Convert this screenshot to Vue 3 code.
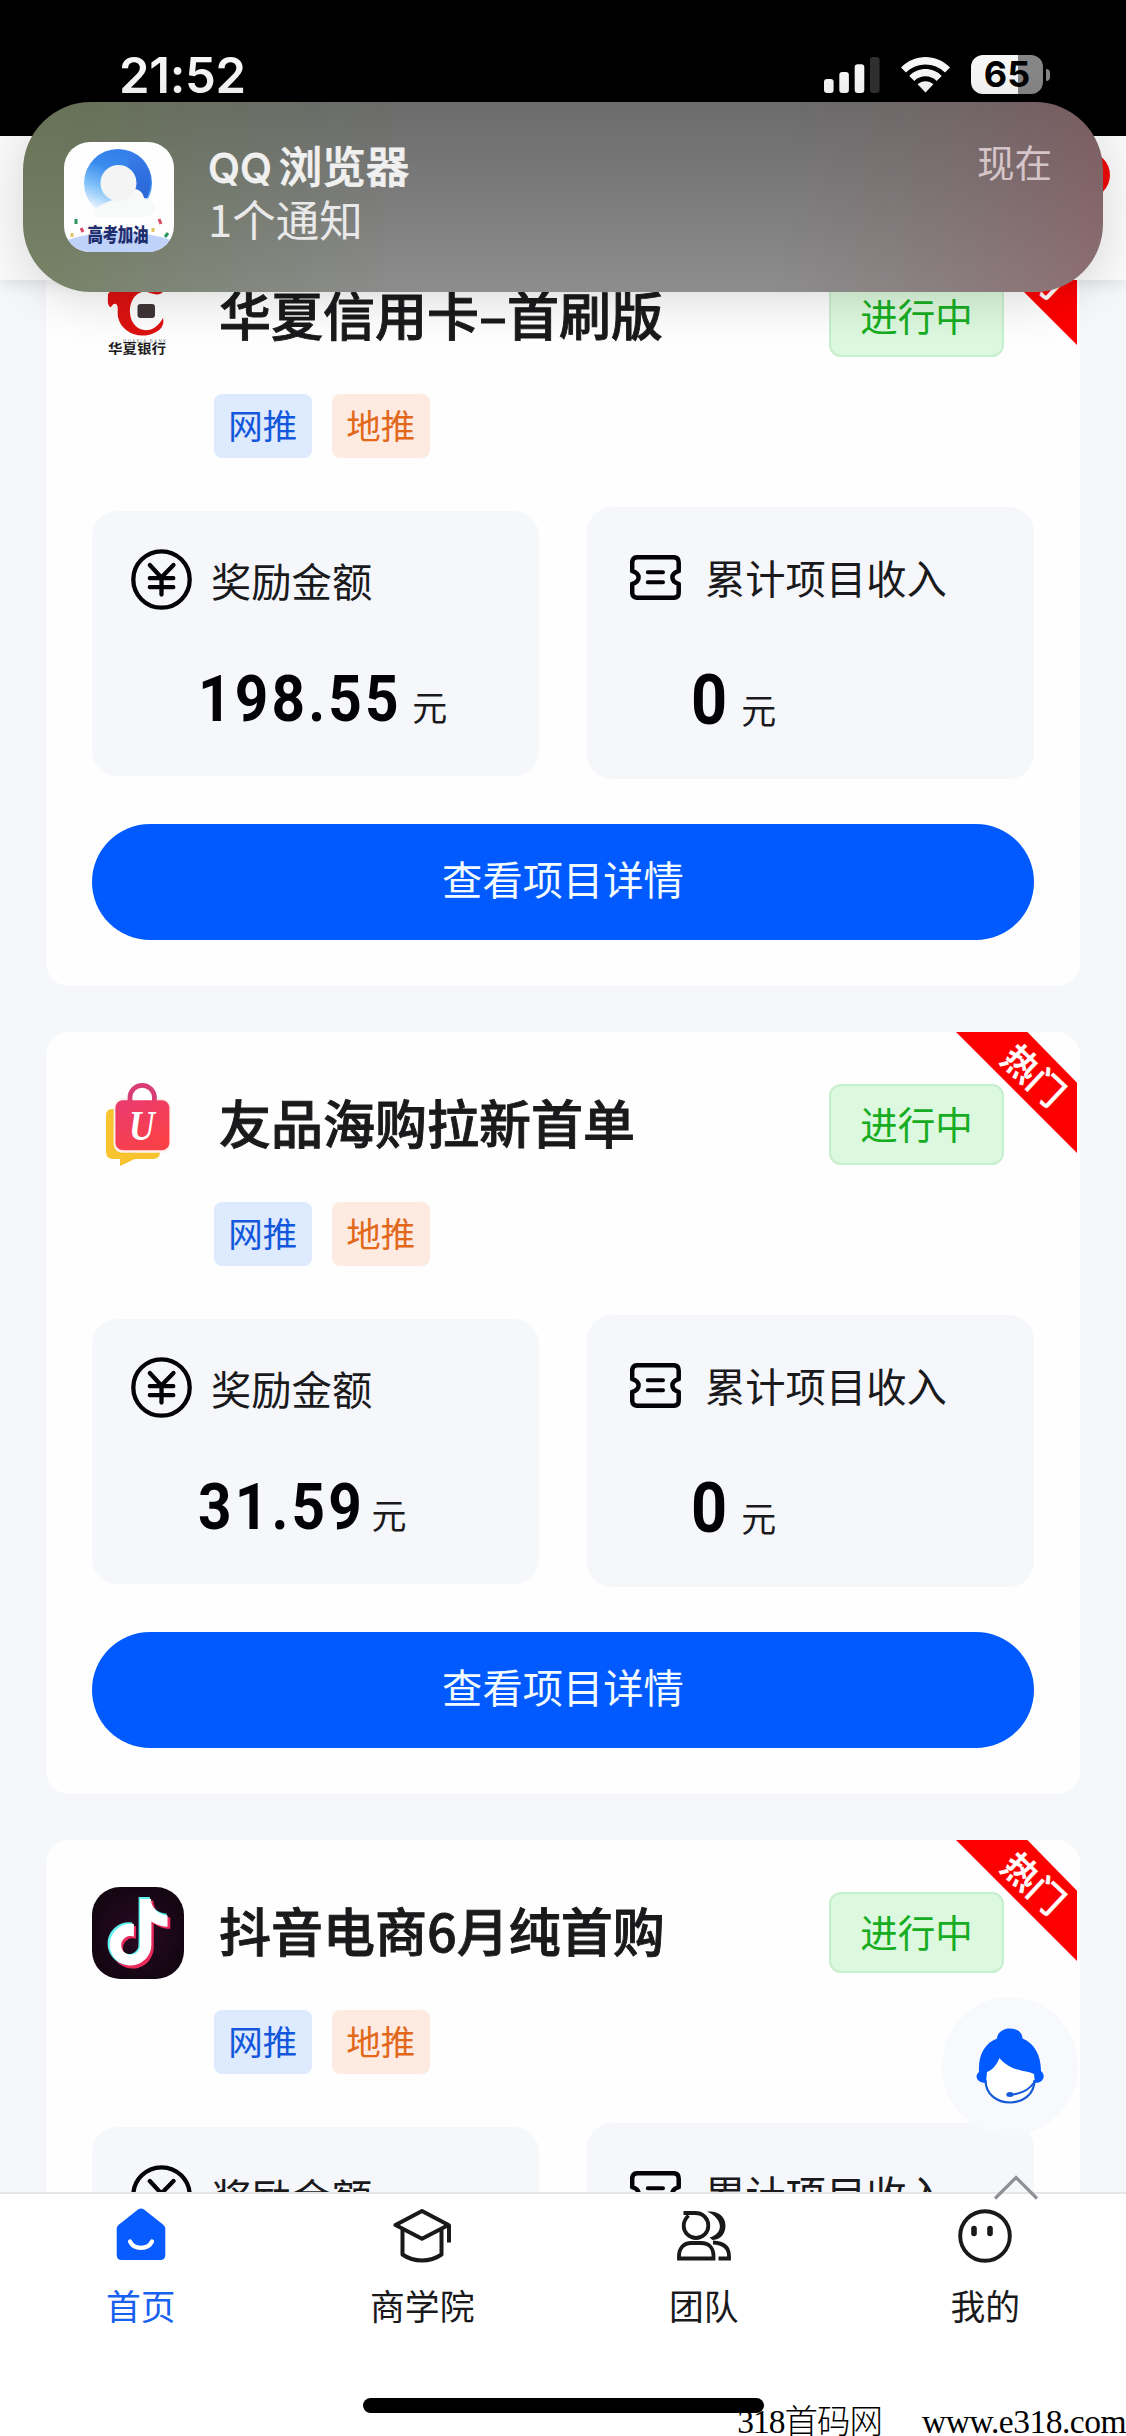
<script setup>
const projects = [
  { id: 'huaxia', name: '华夏信用卡–首刷版', reward: '198.55', income: '0' },
  { id: 'youpin', name: '友品海购拉新首单', reward: '31.59', income: '0' },
  { id: 'douyin', name: '抖音电商6月纯首购' }
]
const note = 'M12.525.02c1.31-.02 2.61-.01 3.91-.02.08 1.53.63 3.09 1.75 4.17 1.12 1.11 2.7 1.62 4.24 1.79v4.03c-1.44-.05-2.89-.35-4.2-.97-.57-.26-1.1-.59-1.62-.93-.01 2.92.01 5.84-.02 8.75-.08 1.4-.54 2.79-1.35 3.94-1.31 1.92-3.58 3.17-5.91 3.21-1.43.08-2.86-.31-4.08-1.03-2.02-1.19-3.44-3.37-3.65-5.71-.02-.5-.03-1-.01-1.49.18-1.9 1.12-3.72 2.58-4.96 1.66-1.44 3.98-2.13 6.15-1.72.02 1.48-.04 2.96-.04 4.44-.99-.32-2.15-.23-3.02.37-.63.41-1.11 1.04-1.36 1.75-.21.51-.15 1.07-.14 1.61.24 1.64 1.82 3.02 3.5 2.87 1.12-.01 2.19-.66 2.77-1.61.19-.33.4-.67.41-1.06.1-1.79.06-3.57.07-5.36.01-4.03-.01-8.05.02-12.07z'
</script>

<template>
  <div class="phone">
    <header class="status-bar">
      <span class="time">21:52</span>
      <div class="indicators">
        <svg class="signal" width="56" height="36" viewBox="0 0 56 36">
          <rect x="0" y="22" width="9.6" height="14" rx="3" fill="#f6f6f6" />
          <rect x="15.3" y="15" width="9.6" height="21" rx="3" fill="#f6f6f6" />
          <rect x="30.7" y="7.3" width="9.6" height="28.7" rx="3" fill="#f6f6f6" />
          <rect x="46" y="0" width="9.6" height="36" rx="3" fill="#303030" />
        </svg>
        <svg class="wifi" width="49" height="36" viewBox="0 0 49 36">
          <path d="M0 10.5C13.5-3.5 35.5-3.5 49 10.5L44 15.6C33.3 4.8 15.7 4.8 5 15.6Z" fill="#f6f6f6" />
          <path d="M8.3 18.9C17.3 9.8 31.7 9.8 40.7 18.9L35.7 24C29.5 17.8 19.5 17.8 13.3 24Z" fill="#f6f6f6" />
          <path d="M16.6 27.3C21 23.2 28 23.2 32.4 27.3L24.5 35.5Z" fill="#f6f6f6" />
        </svg>
        <div class="battery"><span>65</span></div>
        <i class="battery-tip"></i>
      </div>
    </header>

    <div class="nav-bar"><i class="nav-dot"></i></div>

    <main class="list">
      <section v-for="p in projects" :key="p.id" class="card">
        <div class="ribbon"><span>热门</span></div>
        <div class="head">
          <svg v-if="p.id === 'huaxia'" class="logo" width="92" height="92" viewBox="0 0 92 92">
            <path d="M16 23C20 17 24 22 29 20C34 11 48 8 58 13L73 17C70 25 65 24 58 22C47 17 37 28 38 42C39 56 51 63 62 57C67 54 69 50 71 47C73 54 68 60 62 62C47 69 29 61 26 46C25 41 27 35 24 33C20 32 20 37 18 36C15 33 16 29 16 23Z" fill="#dc1210" />
            <rect x="45.5" y="33" width="17.5" height="14" rx="3" fill="#403536" />
            <text x="31" y="71.5" font-size="4.5" textLength="43" fill="#777">HUAXIA BANK</text>
            <text x="16" y="81.5" font-size="13" font-weight="700" textLength="58" lengthAdjust="spacingAndGlyphs" fill="#1c1a1a">华夏银行</text>
          </svg>
          <svg v-else-if="p.id === 'youpin'" class="logo" width="92" height="92" viewBox="0 0 92 92">
            <defs>
              <linearGradient id="bag" x1="0" y1="0" x2=".6" y2="1">
                <stop offset="0" stop-color="#e83a70" />
                <stop offset="1" stop-color="#fb4148" />
              </linearGradient>
            </defs>
            <path d="M20 30H60Q68 34 68 42V73Q68 80 61 80H43L28 87V80H21Q14 80 14 73V37Q14 30 20 30Z" fill="#f7c42f" />
            <rect x="21.6" y="19.3" width="57.5" height="54.5" rx="9" fill="#fdf1ee" />
            <path d="M38 23V18.5a12.2 12.2 0 0 1 24.4 0V23" fill="#fff" stroke="#d83d76" stroke-width="4.8" />
            <rect x="23.4" y="21.3" width="54" height="50" rx="7.5" fill="url(#bag)" />
            <text class="bag-letter" x="60" y="61.5" text-anchor="middle" transform="scale(.83 1)" fill="#fff">U</text>
          </svg>
          <svg v-else class="logo" width="92" height="92" viewBox="0 0 92 92">
            <defs>
              <radialGradient id="night"><stop offset="0" stop-color="#2a0a24" /><stop offset="1" stop-color="#150613" /></radialGradient>
            </defs>
            <rect width="92" height="92" rx="28" fill="url(#night)" />
            <path :d="note" transform="translate(14.8 13.6) scale(2.83)" fill="#ea2a5b" />
            <path :d="note" transform="translate(11.2 10) scale(2.83)" fill="#5df3f0" />
            <path :d="note" transform="translate(13.4 12) scale(2.77)" fill="#fff" />
          </svg>
          <h2>{{ p.name }}</h2>
          <span class="state">进行中</span>
        </div>
        <div class="tags">
          <span class="tag web">网推</span>
          <span class="tag local">地推</span>
        </div>
        <div class="stats">
          <div class="stat reward">
            <div class="stat-label">
              <svg width="61" height="61" viewBox="0 0 61 61" fill="none" stroke="#030306" stroke-width="4.3" stroke-linecap="round" stroke-linejoin="round">
                <circle cx="30.5" cy="30.5" r="28.2" />
                <path d="M18.8 16L30.3 28.5L42.5 16M18.8 29.2H42.3M18.8 38.2H42.3M30.5 28.5V45.5" />
              </svg>
              <span>奖励金额</span>
            </div>
            <div v-if="p.reward" class="value"><b>{{ p.reward }}</b><span>元</span></div>
          </div>
          <div class="stat income">
            <div class="stat-label">
              <svg width="51" height="45" viewBox="0 0 51 45" fill="none" stroke="#030306" stroke-width="4.5" stroke-linecap="round" stroke-linejoin="round">
                <path d="M7.5 2.2H43.5Q48.7 2.2 48.7 7.5V16.2C40.3 18.5 40.3 26.5 48.7 28.8V37.5Q48.7 42.8 43.5 42.8H7.5Q2.2 42.8 2.2 37.5V28.8C10.7 26.5 10.7 18.5 2.2 16.2V7.5Q2.2 2.2 7.5 2.2Z" />
                <path d="M17.8 17.3H33M17.8 27.2H33" stroke-width="4" />
              </svg>
              <span>累计项目收入</span>
            </div>
            <div v-if="p.income" class="value"><b>{{ p.income }}</b><span>元</span></div>
          </div>
        </div>
        <button v-if="p.reward" class="detail" type="button">查看项目详情</button>
      </section>
    </main>

    <nav class="tab-bar">
      <a class="tab active">
        <svg width="58" height="58" viewBox="0 0 58 58">
          <path d="M26 3.5Q29 1.5 32 3.5L51 18.5Q53.3 20.5 53.3 23V49Q53.3 54 48.3 54H9.7Q4.7 54 4.7 49V23Q4.7 20.5 7 18.5Z" fill="#085bff" />
          <path d="M18 35.5C22 44 36 44 40 35.5" fill="none" stroke="#fff" stroke-width="4.2" stroke-linecap="round" />
        </svg>
        <span>首页</span>
      </a>
      <a class="tab">
        <svg width="58" height="58" viewBox="0 0 58 58" fill="none" stroke="#19191b" stroke-width="4" stroke-linejoin="round">
          <path d="M2.5 19L29 5L55.5 19L29 32.8Z" />
          <path d="M9.5 23.5V48.5C21 56.5 37 56.5 48.5 48.5V23.5M56 18.5V36.5" />
        </svg>
        <span>商学院</span>
      </a>
      <a class="tab">
        <svg width="58" height="58" viewBox="0 0 58 58" fill="none" stroke="#19191b" stroke-width="3.8">
          <path d="M8.500 7H20C28.500 7 33.300 13 33.300 19.700A12.300 12.300 0 0 1 8.700 19.700C8.700 15 11 12 13.500 9.500" />
          <path d="M32 5.500H36C41 5.500 50.500 9 50.500 19.500C50.500 30 43 34 37.500 34L34.500 31.500C49 27.500 48.500 13 32 5.500Z" fill="#19191b" stroke="none" />
          <path d="M4 52.5V50C4 42 9 37 16 37H26C34 37 38.500 42 38.500 50V52.5Z" />
          <path d="M38 36.500C49 37 54 42 54 50V52.500H43.500" />
        </svg>
        <span>团队</span>
      </a>
      <a class="tab">
        <svg width="58" height="58" viewBox="0 0 58 58" fill="none" stroke="#19191b">
          <circle cx="29" cy="30" r="24.8" stroke-width="3.9" />
          <path d="M18 22.500V27.500M34 22.500V27.500" stroke-width="5.600" stroke-linecap="round" />
        </svg>
        <span>我的</span>
      </a>
      <i class="home-line"></i>
    </nav>

    <button class="service" type="button" aria-label="客服">
      <svg width="68" height="76" viewBox="0 0 68 76">
        <path d="M10 40L24 28L58 44V54C58 66 48 74 34 74C20 74 10 64 10 50Z" fill="#fff" />
        <path d="M9.500 52C9.500 82 58.500 82 58.500 52" fill="none" stroke="#1459d6" stroke-width="2.200" />
        <path d="M21 10.500C22-3 46-3 46.500 10.500C58 15 65 27 65 43C70 47 68 55 59 55L58 46C50 42 35 44 23.500 30C21 36 17 42 11 44L10 55C1 55-2 48 3 44C2 27 9 15 21 10.500Z" fill="#005aff" />
        <path d="M58.500 54C53 62 46 66 35 66.500" fill="none" stroke="#1459d6" stroke-width="2" />
        <ellipse cx="34" cy="66.500" rx="3.700" ry="2.500" fill="#1459d6" />
      </svg>
    </button>
    <svg class="to-top" width="46" height="26" viewBox="0 0 46 26" fill="none" stroke="#909097" stroke-width="3.200">
      <path d="M2 23.500L23 2.500L44 23.500" />
    </svg>

    <aside class="notice">
      <svg class="notice-icon" width="110" height="110" viewBox="0 0 110 110">
        <defs>
          <linearGradient id="q" x1=".7" y1="0" x2=".3" y2="1">
            <stop offset="0" stop-color="#347bea" />
            <stop offset=".35" stop-color="#388bed" />
            <stop offset=".65" stop-color="#7fc0f8" />
            <stop offset="1" stop-color="#fff" />
          </linearGradient>
          <linearGradient id="q2" x1="0" y1="0" x2="0" y2="1">
            <stop offset="0" stop-color="#3d7ee9" />
            <stop offset="1" stop-color="#1e55cf" />
          </linearGradient>
          <clipPath id="tile"><rect width="110" height="110" rx="26" /></clipPath>
        </defs>
        <g clip-path="url(#tile)">
          <rect width="110" height="110" fill="#fdfefd" />
          <path d="M0 99Q55 80 110 99V110H0Z" fill="#bfd2fa" />
          <circle cx="54" cy="41" r="34" fill="url(#q)" />
          <path d="M66 9.500C86 16 92 38 82 58L70 46C74 38 71 30 64 25Z" fill="url(#q2)" opacity=".8" />
          <path d="M32 75C24 64 50 58 60 54C64 44 78 45 80 56C96 58 94 75 82 75Z" fill="#f8f9f9" />
          <circle cx="54.500" cy="41" r="18" fill="#f3f4f3" />
          <path d="M17 86l2 4M95 77l2 5" stroke="#d94b66" stroke-width="3" />
          <path d="M12 77v5M101 95l3-4" stroke="#2b9660" stroke-width="3" />
          <path d="M8 91v4M89 86v4" stroke="#e4c462" stroke-width="3" />
          <text x="23.500" y="80" transform="scale(1 1.250)" font-size="15.500" font-weight="900" textLength="61" fill="#1d2d6e">高考加油</text>
        </g>
      </svg>
      <div class="notice-body">
        <strong><span>QQ</span>浏览器</strong>
        <p>1个通知</p>
      </div>
      <time>现在</time>
    </aside>

    <div class="watermark"><span>318首码网</span><span>www.e318.com</span></div>
  </div>
</template>

<style>
body {
  margin: 0;
}
</style>

<style scoped>
.phone {
  position: relative;
  display: flex;
  flex-direction: column;
  width: 1126px;
  height: 2436px;
  overflow: hidden;
  background: #f5f7fb;
  color: #1a1a1c;
  font-family: "Noto Sans CJK SC", sans-serif;
}
h2, p {
  margin: 0;
}
svg {
  display: block;
  flex: none;
}
button {
  border: 0;
  padding: 0;
  font-family: inherit;
}
.status-bar {
  flex: none;
  display: flex;
  justify-content: space-between;
  box-sizing: border-box;
  height: 136px;
  padding: 55px 76px 0 119px;
  background: #000;
  font-family: Inter, sans-serif;
}
.time {
  font-size: 49px;
  line-height: 41px;
  font-weight: 600;
  letter-spacing: -0.3px;
  color: #f6f6f6;
}
.indicators {
  display: flex;
  align-items: center;
  height: 39px;
}
.wifi {
  margin-left: 21px;
}
.battery {
  width: 72px;
  height: 39px;
  margin-left: 21px;
  border-radius: 12px;
  background: linear-gradient(90deg, #f6f6f6 65%, #868686 65%);
  color: #000;
  font-size: 36px;
  font-weight: 700;
  line-height: 39px;
  text-align: center;
}
.battery-tip {
  width: 4px;
  height: 12px;
  margin-left: 3px;
  border-radius: 0 5px 5px 0;
  background: #868686;
}
.nav-bar {
  position: relative;
  z-index: 2;
  flex: none;
  height: 144px;
  background: #fafafa;
  box-shadow: 0 4px 14px rgba(0, 0, 0, 0.09);
}
.nav-dot {
  position: absolute;
  right: 16px;
  top: 16px;
  width: 46px;
  height: 46px;
  border-radius: 50%;
  background: #f00808;
}
.list {
  flex: 1;
  min-height: 0;
  margin-top: -56px;
  padding: 0 46px;
  overflow: hidden;
}
.card {
  position: relative;
  box-sizing: border-box;
  height: 762px;
  margin-bottom: 46px;
  padding: 46px;
  border-radius: 23px;
  background: #fefefe;
}
.ribbon {
  position: absolute;
  top: 0;
  right: 3px;
  width: 121px;
  height: 121px;
  background: #fd0100;
  clip-path: polygon(0 0, 59% 0, 100% 42%, 100% 100%);
}
.ribbon span {
  position: absolute;
  left: 39px;
  top: 17px;
  width: 80px;
  line-height: 50px;
  text-align: center;
  font-size: 35px;
  font-weight: 500;
  color: #fff;
  -webkit-text-stroke: 0.6px #fff;
  transform: rotate(43deg);
}
.head {
  display: flex;
  align-items: center;
  height: 93px;
}
.head h2 {
  margin: -6px 0 0 35px;
  font-size: 52px;
  font-weight: 500;
  line-height: 70px;
  white-space: nowrap;
  -webkit-text-stroke: 0.9px #1a1a1c;
}
.state {
  box-sizing: border-box;
  width: 175px;
  height: 81px;
  margin: 0 30px 0 auto;
  border: 2px solid #c6efcd;
  border-radius: 12px;
  background: #dcf8de;
  color: #17ad22;
  font-size: 37.5px;
  line-height: 74px;
  text-align: center;
}
.tags {
  display: flex;
  gap: 20.5px;
  margin-top: 31px;
  padding-left: 122px;
}
.tag {
  width: 97.5px;
  height: 64px;
  border-radius: 8px;
  font-size: 34.5px;
  line-height: 60px;
  text-align: center;
}
.web {
  background: #deeafd;
  color: #1257dc;
}
.local {
  background: #fdebe1;
  color: #e2681b;
}
.stats {
  display: flex;
  align-items: center;
  justify-content: space-between;
  height: 272px;
  margin-top: 49px;
}
.stat {
  box-sizing: border-box;
  width: 447px;
  border-radius: 25px;
  background: #f6f7fb;
}
.reward {
  height: 265px;
  padding: 38px 0 0 39px;
}
.income {
  height: 272px;
  padding: 48px 0 0 43px;
}
.stat-label {
  display: flex;
  align-items: center;
  font-size: 40.3px;
  line-height: 45px;
}
.reward .stat-label {
  height: 61px;
}
.stat-label span {
  margin: 1px 0 0 19px;
}
.income .stat-label {
  height: 45px;
}
.income .stat-label span {
  margin: -2px 0 0 24px;
}
.value {
  display: flex;
  align-items: baseline;
  height: 64px;
}
.value b {
  color: #030307;
  font-family: Roboto, sans-serif;
  font-weight: 700;
  line-height: 64px;
  transform-origin: left;
}
.value span {
  font-size: 35px;
  line-height: 50px;
}
.reward .value {
  margin: 57px 0 0 67px;
}
.reward .value b {
  font-size: 65px;
  letter-spacing: 3.5px;
  transform: scaleX(0.9);
}
.reward .value span {
  margin-left: -12px;
}
.income .value {
  margin: 68px 0 0 61px;
}
.income .value b {
  font-size: 70px;
  transform: scaleX(0.9);
}
.income .value span {
  margin-left: 10px;
}
.detail {
  display: block;
  width: 100%;
  height: 116px;
  margin-top: 45px;
  padding-bottom: 8px;
  border-radius: 58px;
  background: #005aff;
  color: #f2fbff;
  font-size: 40.3px;
  line-height: 108px;
}
.bag-letter {
  font: italic 700 43px "Liberation Serif", serif;
}
.tab-bar {
  position: relative;
  z-index: 1;
  flex: none;
  display: flex;
  box-sizing: border-box;
  height: 244px;
  border-top: 2px solid #e6e6ea;
  background: #fff;
}
.tab {
  flex: 1;
  display: flex;
  flex-direction: column;
  align-items: center;
  padding-top: 12px;
  font-size: 34.8px;
  line-height: 50px;
}
.tab span {
  margin-top: 16px;
}
.active {
  color: #1860f0;
}
.home-line {
  position: absolute;
  left: 363px;
  bottom: 23px;
  width: 401px;
  height: 15px;
  border-radius: 8px;
  background: #000;
}
.service {
  position: absolute;
  left: 942px;
  top: 1997px;
  display: flex;
  align-items: center;
  justify-content: center;
  width: 136px;
  height: 138px;
  border-radius: 50%;
  background: #f8f9fd;
}
.to-top {
  position: absolute;
  z-index: 2;
  left: 993px;
  top: 2175px;
}
.notice {
  position: absolute;
  z-index: 3;
  left: 23px;
  top: 102px;
  display: flex;
  box-sizing: border-box;
  width: 1080px;
  height: 190px;
  padding: 40px 51px 0 41px;
  border-radius: 68px;
  background:
    linear-gradient(96deg, rgba(98, 120, 66, 0.5) 3%, rgba(98, 118, 76, 0.28) 18%, transparent 36%),
    linear-gradient(276deg, rgba(142, 66, 76, 0.38) 2%, rgba(132, 80, 88, 0.24) 14%, transparent 30%),
    linear-gradient(#6b6b6b, #8d8d8d);
  box-shadow: 0 8px 50px rgba(0, 0, 0, 0.14);
}
.notice-body {
  margin: -3px 0 0 34px;
  color: #f0f0f0;
  font-size: 43.5px;
  line-height: 51px;
}
.notice-body strong {
  display: block;
  font-weight: 500;
  -webkit-text-stroke: 0.8px #f0f0f0;
}
.notice-body strong span {
  margin-right: 7px;
  font: 500 41.500px Inter, sans-serif;
}
.notice-body p {
  color: #e9e9e9;
}
.notice time {
  margin: -3px 0 0 auto;
  color: #d5c5c9;
  font-size: 37.5px;
  line-height: 44px;
}
.watermark {
  position: absolute;
  z-index: 4;
  right: 0;
  bottom: -10px;
  display: flex;
  gap: 40px;
  color: #000;
  font: 300 33.500px/48px "Liberation Serif", "Noto Sans CJK SC", serif;
  white-space: nowrap;
}
.watermark span:first-child {
  letter-spacing: -1px;
}
.watermark span:last-child {
  letter-spacing: -0.5px;
}
</style>
